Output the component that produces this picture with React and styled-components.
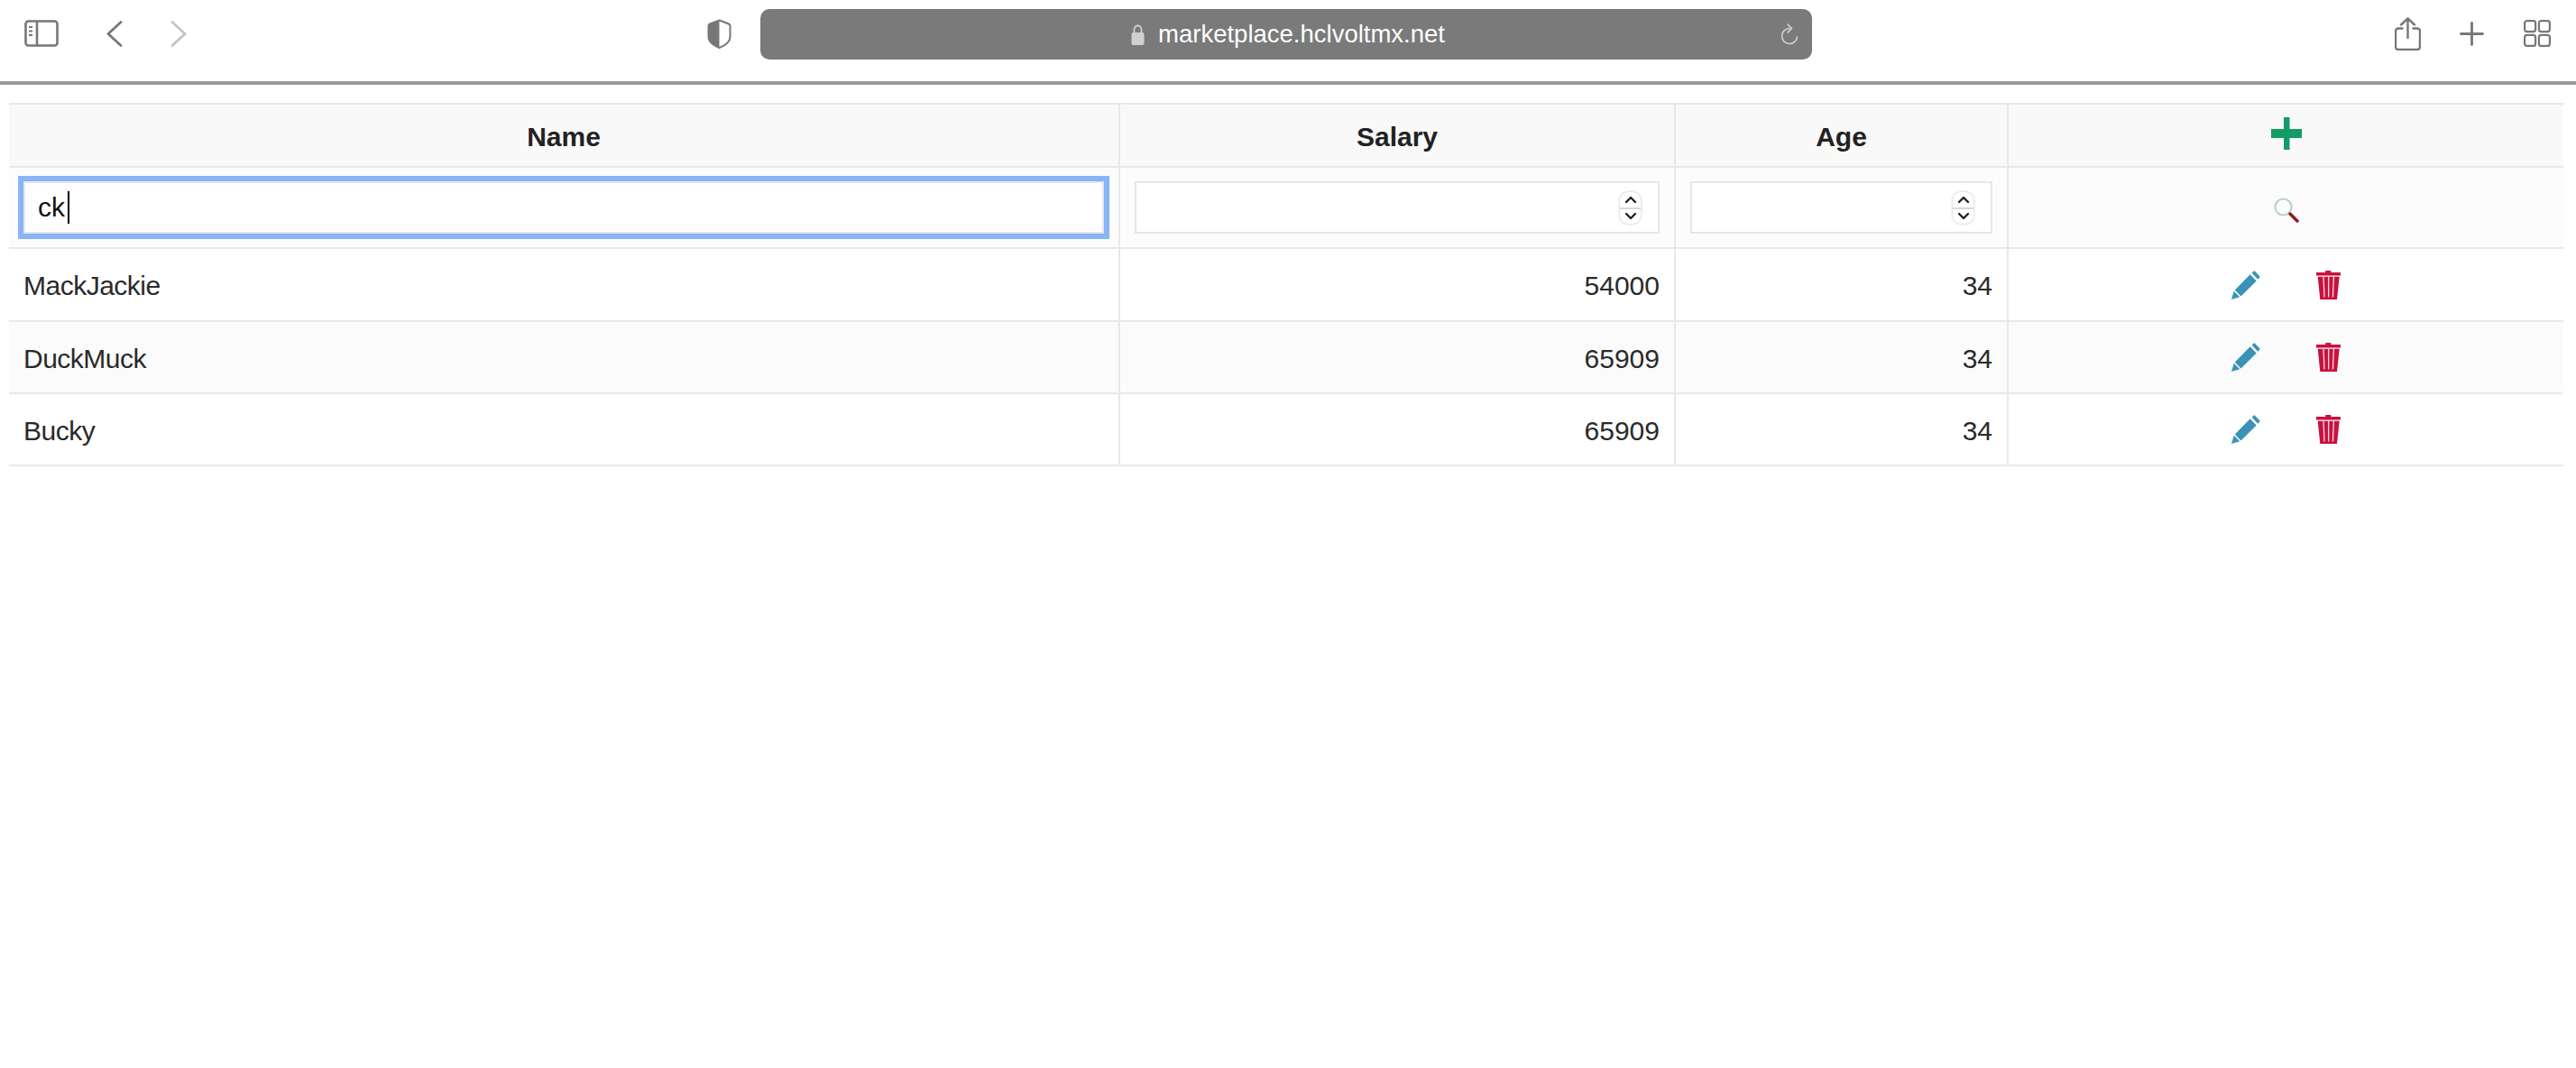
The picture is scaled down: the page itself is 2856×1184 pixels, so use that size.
import React from 'react'
import styled, { createGlobalStyle } from 'styled-components'

const GlobalStyle = createGlobalStyle`
  html, body { margin: 0; padding: 0; background: #ffffff; }
  body { font-family: "Liberation Sans", Arial, sans-serif; color: #222222; }
`

const Toolbar = styled.div`
  display: flex;
  align-items: center;
  box-sizing: border-box;
  height: 94px;
  padding: 0 0 14px 27px;
  border-bottom: 4px solid #999999;
`

const ToolIcon = styled.svg`
  display: block;
  flex: none;
  margin-left: ${props => props.$gap || 0}px;
  transform: translateY(-1px);
`

const UrlBar = styled.div`
  flex: none;
  display: grid;
  grid-template-columns: 1fr auto 1fr;
  align-items: center;
  box-sizing: border-box;
  width: 1166px;
  height: 56px;
  margin-left: 32px;
  padding: 0 14px 0 18px;
  border-radius: 10px;
  background: #7a7a7a;
`

const UrlText = styled.div`
  grid-column: 2;
  display: flex;
  align-items: center;
  gap: 15px;
  font-size: 27.5px;
  color: #ffffff;
`

const ReloadSlot = styled.div`
  grid-column: 3;
  justify-self: end;
`

const Table = styled.table`
  width: 2832px;
  margin: 20px 0 0 10px;
  table-layout: fixed;
  border-collapse: separate;
  border-spacing: 0;
  font-size: 30px;
`

const HeadCell = styled.th`
  box-sizing: border-box;
  height: 72px;
  padding: 3px 16px 0;
  border-top: 2px solid #e8e8e8;
  border-bottom: 2px solid #e8e8e8;
  background: #f9f9f9;
  font-weight: 700;
  text-align: center;
  vertical-align: middle;
  color: #222222;
  &:not(:first-child) { border-left: 2px solid #e8e8e8; }
`

const FilterCell = styled.td`
  box-sizing: border-box;
  height: 90px;
  padding: 0 16px;
  border-bottom: 2px solid #e8e8e8;
  background: #fcfcfc;
  vertical-align: middle;
  &:not(:first-child) { border-left: 2px solid #e8e8e8; }
`

const FilterBox = styled.div`
  position: relative;
  height: 58px;
`

const FilterInput = styled.input`
  display: block;
  box-sizing: border-box;
  width: 100%;
  height: 58px;
  padding: 0 14px;
  border: 2px solid #e6e6e6;
  border-radius: 0;
  outline: none;
  background: #ffffff;
  font-family: inherit;
  font-size: 30px;
  color: #111111;
  box-shadow: ${props => (props.$focused ? '0 0 0 6px #87b5f7' : 'none')};
`

const Caret = styled.span`
  position: absolute;
  left: 49px;
  top: 11px;
  width: 2px;
  height: 36px;
  background: #000000;
`

const Spinner = styled.div`
  position: absolute;
  top: 12px;
  right: 21px;
  display: flex;
  flex-direction: column;
  box-sizing: border-box;
  width: 23px;
  height: 35px;
  border-radius: 9px;
  background: #ffffff;
  box-shadow: 0 0 3px rgba(0, 0, 0, 0.28);
`

const SpinStep = styled.div`
  flex: 1;
  display: flex;
  align-items: center;
  justify-content: center;
  & + & { border-top: 2px solid #d8d8d8; }
`

const Row = styled.tr`
  &:first-child td { height: 81px; }
`

const Cell = styled.td`
  box-sizing: border-box;
  height: 80px;
  padding: 3px 16px 0;
  border-bottom: 2px solid #e8e8e8;
  background: ${props => (props.$striped ? '#fbfbfb' : '#ffffff')};
  text-align: ${props => props.$align || 'left'};
  letter-spacing: ${props => props.$tight ? '-0.5px' : '0'};
  vertical-align: middle;
  color: #2a2a2a;
  &:not(:first-child) { border-left: 2px solid #e8e8e8; }
`

const Actions = styled.div`
  display: flex;
  align-items: center;
  justify-content: center;
  gap: 62px;
  margin: -3px 0 0 -1px;
`

const CenterIcon = styled.div`
  display: flex;
  justify-content: center;
  transform: translateY(${props => props.$shift || 0}px);
`

const SidebarIcon = () => (
  <ToolIcon width="38" height="30" viewBox="0 0 38 30" fill="none">
    <rect x="1.5" y="1.5" width="35" height="27" rx="3" stroke="#777" strokeWidth="2.6" />
    <path d="M14 1.5v27" stroke="#777" strokeWidth="2.6" />
    <path d="M5 8h4M5 12.5h4M5 17h4" stroke="#777" strokeWidth="2" />
  </ToolIcon>
)

const Chevron = ({ dir, color, gap }) => (
  <ToolIcon $gap={gap} width="18" height="29" viewBox="0 0 18 29" fill="none">
    <path d={dir === 'left' ? 'M16 1.5 2 14.5l14 13' : 'M2 1.5l14 13-14 13'} stroke={color} strokeWidth="2.8" strokeLinecap="round" strokeLinejoin="round" />
  </ToolIcon>
)

const ShieldIcon = () => (
  <ToolIcon $gap={577} width="27" height="33" viewBox="0 0 27 33">
    <path d="M13.5 1.5 3 5.5C2 6 1.5 6.5 1.5 8v12c0 5 6 9.5 12 12V1.5Z" fill="#777" />
    <path d="M13.5 1.5 24 5.5c1 .5 1.5 1 1.5 2.500v12c0 5-6 9.500-12 12-6-2.500-12-7-12-12V8c0-1.500.5-2 1.500-2.500Z" fill="none" stroke="#777" strokeWidth="2" />
  </ToolIcon>
)

const LockIcon = () => (
  <svg width="15" height="23" viewBox="0 0 15 23" style={{ display: 'block' }}>
    <path d="M3.500 10V5.500a4 4 0 0 1 8 0V10" fill="none" stroke="#d0d0d0" strokeWidth="1.800" />
    <rect x="0.500" y="9" width="14" height="14" rx="2" fill="#d0d0d0" />
  </svg>
)

const ReloadIcon = () => (
  <svg width="20" height="25" viewBox="0 0 20 25" fill="none" style={{ display: 'block' }}>
    <path d="M9 5.500a8.500 8.500 0 1 0 8.500 9.500" stroke="#d4d4d4" strokeWidth="1.600" strokeLinecap="round" />
    <path d="M7 1l4.500 4.500L7 10" stroke="#d4d4d4" strokeWidth="1.600" strokeLinecap="round" strokeLinejoin="round" />
  </svg>
)

const ShareIcon = () => (
  <ToolIcon $gap={646} width="29" height="37" viewBox="0 0 29 37" fill="none">
    <path d="M8.500 12.500H4a3 3 0 0 0-3 3V33a3 3 0 0 0 3 3h21a3 3 0 0 0 3-3V15.500a3 3 0 0 0-3-3h-4.500" stroke="#777" strokeWidth="2.400" strokeLinecap="round" />
    <path d="M14.500 23V2M7 8.500 14.500 1.500 22 8.500" stroke="#777" strokeWidth="2.400" strokeLinecap="round" strokeLinejoin="round" />
  </ToolIcon>
)

const NewTabIcon = () => (
  <ToolIcon $gap={43} width="27" height="27" viewBox="0 0 27 27" fill="none">
    <path d="M13.500 1.500v24M1.500 13.500h24" stroke="#777" strokeWidth="2.800" strokeLinecap="round" />
  </ToolIcon>
)

const TabsIcon = () => (
  <ToolIcon $gap={44} width="30" height="30" viewBox="0 0 30 30" fill="none" stroke="#777" strokeWidth="2.200">
    <rect x="1.100" y="1.100" width="12" height="12" rx="2.500" />
    <rect x="16.900" y="1.100" width="12" height="12" rx="2.500" />
    <rect x="1.100" y="16.900" width="12" height="12" rx="2.500" />
    <rect x="16.900" y="16.900" width="12" height="12" rx="2.500" />
  </ToolIcon>
)

const AddIcon = () => (
  <svg width="34" height="36" viewBox="0 0 34 36" style={{ display: 'block' }}>
    <path d="M14 0h6.500v13H34v10H20.500v13H14V23H0V13h14Z" fill="#149b66" />
  </svg>
)

const SearchIcon = () => (
  <svg width="28" height="28" viewBox="0 0 28 28" fill="none" style={{ display: 'block' }}>
    <circle cx="10.500" cy="10.500" r="9" stroke="#bcd1d1" strokeWidth="2.200" />
    <path d="M18 18l8 8" stroke="#8a1c24" strokeWidth="3.400" strokeLinecap="round" />
  </svg>
)

const SpinArrow = ({ up }) => (
  <svg width="14" height="10" viewBox="0 0 14 10" fill="none" style={{ display: 'block' }}>
    <path d={up ? 'M2 8l5-5 5 5' : 'M2 2l5 5 5-5'} stroke="#222" strokeWidth="2.400" strokeLinecap="round" strokeLinejoin="round" />
  </svg>
)

const PencilIcon = () => (
  <svg width="32" height="32" viewBox="0 0 32 32" fill="#3a93b5" style={{ display: 'block' }}>
    <path d="M0 32l2.700-9.300 6.600 6.600Z" />
    <path d="M3.800 21.500 20.700 4.300l7 7.200L10.500 28.500Z" />
    <path d="M22.700 2.700 25.300 0l6.500 6.700-2.500 3Z" />
  </svg>
)

const TrashIcon = () => (
  <svg width="27" height="32" viewBox="0 0 27 32" style={{ display: 'block' }}>
    <path d="M10.300 0h6v2h10.700v3.500H0V2h10.300Z" fill="#c9103f" />
    <path d="M1.700 6.700h24L23 32H4.300Z" fill="#c9103f" />
    <path d="M8 7l1 22.500M13.700 7v22.500M19.400 7l-1 22.500" stroke="#f7dfe5" strokeWidth="1.300" fill="none" />
  </svg>
)

const NumberFilter = () => (
  <FilterBox>
    <FilterInput type="text" readOnly value="" />
    <Spinner>
      <SpinStep><SpinArrow up /></SpinStep>
      <SpinStep><SpinArrow /></SpinStep>
    </Spinner>
  </FilterBox>
)

const people = [
  { name: 'MackJackie', salary: 54000, age: 34 },
  { name: 'DuckMuck', salary: 65909, age: 34 },
  { name: 'Bucky', salary: 65909, age: 34 },
]

export default function App() {
  return (
    <>
      <GlobalStyle />
      <Toolbar>
        <SidebarIcon />
        <Chevron dir="left" color="#777" gap={53} />
        <Chevron dir="right" color="#c4c4c4" gap={53} />
        <ShieldIcon />
        <UrlBar>
          <UrlText>
            <LockIcon />
            marketplace.hclvoltmx.net
          </UrlText>
          <ReloadSlot><ReloadIcon /></ReloadSlot>
        </UrlBar>
        <ShareIcon />
        <NewTabIcon />
        <TabsIcon />
      </Toolbar>
      <Table>
        <colgroup>
          <col style={{ width: 1230 }} />
          <col style={{ width: 616 }} />
          <col style={{ width: 369 }} />
          <col style={{ width: 617 }} />
        </colgroup>
        <thead>
          <tr>
            <HeadCell>Name</HeadCell>
            <HeadCell>Salary</HeadCell>
            <HeadCell>Age</HeadCell>
            <HeadCell><CenterIcon $shift={-4}><AddIcon /></CenterIcon></HeadCell>
          </tr>
          <tr>
            <FilterCell>
              <FilterBox>
                <FilterInput $focused type="text" readOnly value="ck" />
                <Caret />
              </FilterBox>
            </FilterCell>
            <FilterCell><NumberFilter /></FilterCell>
            <FilterCell><NumberFilter /></FilterCell>
            <FilterCell><CenterIcon $shift={3}><SearchIcon /></CenterIcon></FilterCell>
          </tr>
        </thead>
        <tbody>
          {people.map((person, i) => (
            <Row key={person.name}>
              <Cell $striped={i === 1} $tight>{person.name}</Cell>
              <Cell $striped={i === 1} $align="right">{person.salary}</Cell>
              <Cell $striped={i === 1} $align="right">{person.age}</Cell>
              <Cell $striped={i === 1}>
                <Actions>
                  <PencilIcon />
                  <TrashIcon />
                </Actions>
              </Cell>
            </Row>
          ))}
        </tbody>
      </Table>
    </>
  )
}
